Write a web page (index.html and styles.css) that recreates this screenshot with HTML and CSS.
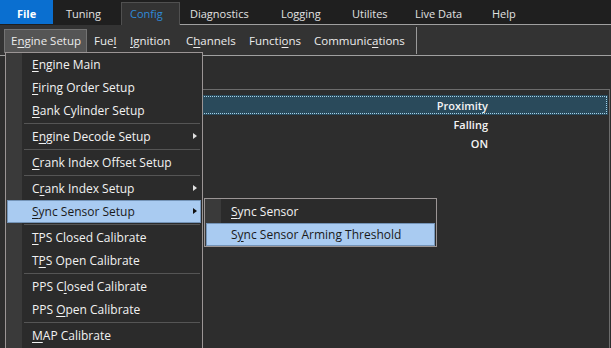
FILE: index.html
```html
<!DOCTYPE html>
<html lang="en">
<head>
  <meta charset="UTF-8" />
  <title>Config — Engine Setup</title>
  <link rel="stylesheet" href="styles.css">
</head>
<body>
<div class="app">

  <div class="menubar">
    <span class="mi mi-file">File</span>
    <span class="mi mi-tuning">Tuning</span>
    <span class="mi active">Config</span>
    <span class="mi">Diagnostics</span>
    <span class="mi">Logging</span>
    <span class="mi">Utilites</span>
    <span class="mi">Live Data</span>
    <span class="mi">Help</span>
  </div>

  <div class="toolbar">
    <span class="tb pressed">E<u>n</u>gine Setup</span>
    <span class="tb">Fue<u>l</u></span>
    <span class="tb"><u>I</u>gnition</span>
    <span class="tb">C<u>h</u>annels</span>
    <span class="tb">Functi<u>o</u>ns</span>
    <span class="tb">Communic<u>a</u>tions</span>
    <span class="tb-sep"></span>
  </div>

  <div class="content">
    <div class="grid">
      <div class="row sel">Proximity</div>
      <div class="row">Falling</div>
      <div class="row">ON</div>
    </div>
  </div>

  <!-- Engine Setup dropdown -->
  <div class="menu">
    <div class="mitem"><u>E</u>ngine Main</div>
    <div class="mitem"><u>F</u>iring Order Setup</div>
    <div class="mitem"><u>B</u>ank Cylinder Setup</div>
    <div class="msep"></div>
    <div class="mitem sub">E<u>n</u>gine Decode Setup</div>
    <div class="msep"></div>
    <div class="mitem"><u>C</u>rank Index Offset Setup</div>
    <div class="msep"></div>
    <div class="mitem sub">C<u>r</u>ank Index Setup</div>
    <div class="mitem sub hot"><u>S</u>ync Sensor Setup</div>
    <div class="msep"></div>
    <div class="mitem"><u>T</u>PS Closed Calibrate</div>
    <div class="mitem">T<u>P</u>S Open Calibrate</div>
    <div class="msep"></div>
    <div class="mitem">PPS C<u>l</u>osed Calibrate</div>
    <div class="mitem">PPS <u>O</u>pen Calibrate</div>
    <div class="msep"></div>
    <div class="mitem"><u>M</u>AP Calibrate</div>
  </div>

  <!-- Sync Sensor Setup submenu -->
  <div class="submenu">
    <div class="mitem"><u>S</u>ync Sensor</div>
    <div class="mitem hot">S<u>y</u>nc Sensor Arming Threshold</div>
  </div>

</div>
</body>
</html>
```

FILE: styles.css
```css
* { box-sizing: border-box; margin: 0; padding: 0; }
body {
  background: #2d2d2d;
  color: #eee;
  font-family: "Open Sans", "Noto Sans", sans-serif;
  overflow: hidden;
}
u { text-decoration-thickness: 1px; text-underline-offset: 2px; }

.app { position: relative; height: 348px; }

/* top menu */
.menubar {
  display: grid;
  grid-template-columns: 53px 68px 59px 91px 71px 63px 77px 1fr;
  grid-template-rows: 25px;
  align-items: start;
  background: #1f1f1f;
  font-size: 11px;
}

.mi {
  height: 25px;
  padding: 4px 0 0 10px;
  line-height: 20px;
  color: #e2e2e2;
  white-space: nowrap;
}
.mi.active ~ .mi { border-bottom: 1px solid #a0a0a0; }

.mi-file {
  height: 24px;
  padding-left: 0;
  background: #0a6fd0;
  color: #fff;
  font-weight: 700;
  text-align: center;
}
.mi-tuning { padding-left: 13px; }

.mi.active {
  height: 23px;
  margin-top: 2px;
  padding: 1px 0 0 8px;
  background: #333;
  border: 1px solid #505050;
  border-bottom: 0;
  color: #2f8ad8;
}

/* toolbar */
.toolbar {
  display: grid;
  grid-template-columns: 83px 36px 56px 63px 65px 105px auto;
  height: 31px;
  padding: 4px 0 0 4px;
  background: #333;
  border-bottom: 1px solid #a0a0a0;
  font-size: 11.5px;
}

.tb {
  height: 24px;
  padding-left: 7px;
  line-height: 24px;
  color: #ececec;
  white-space: nowrap;
}
.tb.pressed {
  padding-left: 6px;
  line-height: 22px;
  background: #555;
  border: 1px solid #737373;
}

.tb-sep {
  width: 1px;
  height: 27px;
  margin: -2px 0 0 4px;
  background: #9a9a9a;
}

/* property grid */
.content { padding-top: 33px; }

.grid {
  height: 259px;
  margin: 0 1px 0 12px;
  padding: 5px 1px 0 0;
  border-top: 1px solid #6c6c6c;
  border-right: 1px solid #6c6c6c;
}

.row {
  height: 19px;
  padding-right: 120px;
  line-height: 19px;
  text-align: right;
  font-size: 11px;
  font-weight: 600;
  color: #f4f4f4;
}
.row.sel {
  height: 20px;
  line-height: 21px;
  background: #2a4a5b;
  outline: 1px dotted #a3d2ea;
  outline-offset: -2px;
}

/* dropdown menus */
.menu, .submenu {
  position: absolute;
  border: 1px solid #9b9595;
  background: linear-gradient(to right, #3a3a3a 16px, #2b2b2b 16px);
  font-size: 12px;
}
.menu { left: 5px; top: 52px; width: 198px; height: 300px; }
.submenu { left: 204px; top: 198px; width: 233px; padding-top: 1px; }

.mitem {
  position: relative;
  height: 23px;
  padding-left: 26px;
  line-height: 23px;
  color: #f2f2f2;
  white-space: nowrap;
}
.mitem.sub::after {
  content: "";
  position: absolute;
  right: 5px;
  top: 8px;
  border-left: 4px solid #e0e0e0;
  border-top: 3.5px solid transparent;
  border-bottom: 3.5px solid transparent;
}

.mitem.hot {
  margin: 0 1px;
  padding-left: 24px;
  line-height: 21px;
  background: #a9cbf1;
  border: 1px solid #7494b8;
  color: #1a1a1a;
}
.mitem.hot.sub::after { right: 3px; top: 7px; border-left-color: #111; }

.msep {
  height: 1px;
  margin: 1px 2px 1px 18px;
  background: #555;
}
```
